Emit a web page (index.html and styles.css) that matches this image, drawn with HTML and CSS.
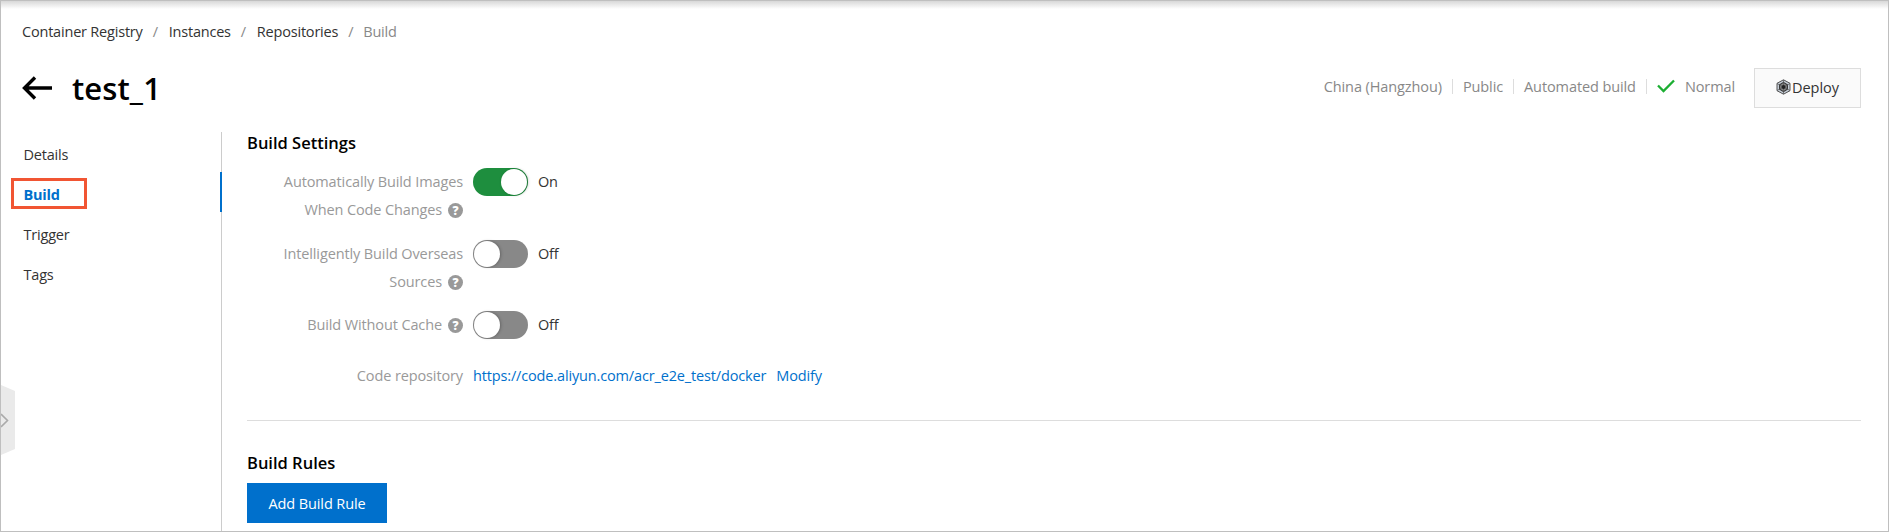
FILE: index.html
```
<!DOCTYPE html>
<html lang="en">
<head>
    <meta charset="UTF-8">
    <meta name="viewport" content="width=device-width, initial-scale=1.0">
    <title>test_1 - Container Registry</title>
    <link rel="stylesheet" href="styles.css">
</head>
<body>

<div class="page">
    <!-- Breadcrumb -->
    <nav class="breadcrumb">
        <a>Container Registry</a>
        <span class="slash">/</span>
        <a>Instances</a>
        <span class="slash">/</span>
        <a>Repositories</a>
        <span class="slash">/</span>
        <span class="current">Build</span>
    </nav>

    <!-- Title and status -->
    <header class="page-header">
        <svg class="back" width="31" height="24" viewBox="0 0 31 24">
            <path d="M13 1.5L2.5 12L13 22.5M2.5 12H30" fill="none" stroke="#000" stroke-width="3.4"/>
        </svg>
        <h1>test_1</h1>
        <div class="meta">
            <span>China (Hangzhou)</span>
            <span>Public</span>
            <span>Automated build</span>
            <span class="status">
                <svg width="18" height="14" viewBox="0 0 18 14">
                    <path d="M1 6.5L6.5 12L17 1.5" fill="none" stroke="#1cae32" stroke-width="2.3"/>
                </svg>
                Normal
            </span>
        </div>
        <button class="deploy">
            <svg width="15" height="16" viewBox="0 0 15 16">
                <path d="M7.5 .8L14 4.3V11.7L7.5 15.2L1 11.7V4.3Z" fill="#c5cdd6" stroke="#555" stroke-width="1"/>
                <path d="M7.5 3.4L11.4 5.7V10.3L7.5 12.6L3.6 10.3V5.7Z" fill="#888" stroke="#333" stroke-width="1.1"/>
                <path d="M7.5 1V15M1 4.5L14 11.5M14 4.5L1 11.5" stroke="#555" stroke-width=".7"/>
                <circle cx="7.5" cy="8" r="2" fill="#222"/>
            </svg>
            <span>Deploy</span>
        </button>
    </header>

    <div class="content">
        <!-- Side menu -->
        <ul class="side-menu">
            <li>Details</li>
            <li class="active">Build</li>
            <li>Trigger</li>
            <li>Tags</li>
        </ul>

        <main>
            <h2>Build Settings</h2>
            <div class="settings">
                <div class="row">
                    <div class="label">
                        <div>Automatically Build Images</div>
                        <div>When Code Changes<i class="help">?</i></div>
                    </div>
                    <div class="value"><span class="switch on"></span>On</div>
                </div>
                <div class="row">
                    <div class="label">
                        <div>Intelligently Build Overseas</div>
                        <div>Sources<i class="help">?</i></div>
                    </div>
                    <div class="value"><span class="switch"></span>Off</div>
                </div>
                <div class="row cache">
                    <div class="label">
                        <div>Build Without Cache<i class="help">?</i></div>
                    </div>
                    <div class="value"><span class="switch"></span>Off</div>
                </div>
                <div class="row repo">
                    <div class="label">Code repository</div>
                    <div class="value"><a>https://code.aliyun.com/acr_e2e_test/docker</a><a>Modify</a></div>
                </div>
            </div>

            <h2 class="rules">Build Rules</h2>
            <button class="primary">Add Build Rule</button>
        </main>
    </div>

    <!-- Collapsed drawer handle -->
    <svg class="drawer" width="14" height="70" viewBox="0 0 14 70">
        <path d="M0 0L14 6V64L0 70Z" fill="#eaeaea"/>
        <path d="M0 29L6.5 35.5L0 42" fill="none" stroke="#aaa" stroke-width="1.6"/>
    </svg>
</div>

</body>
</html>
```

FILE: styles.css
```
* {
    box-sizing: border-box;
}

body {
    margin: 0;
    font-family: "Open Sans", "Noto Sans", sans-serif;
    font-size: 14.5px;
    letter-spacing: -0.2px;
    color: #333;
    background: #fff;
}

h1, h2, ul {
    margin: 0;
    padding: 0;
}

.page {
    position: relative;
    display: flex;
    flex-direction: column;
    height: 532px;
    border: 1px solid #bfbfbf;
    background: linear-gradient(#d8d8d8, #fff 8px);
    overflow: hidden;
}

/* Breadcrumb */
.breadcrumb {
    display: flex;
    gap: 10px;
    padding: 20px 0 0 21px;
    line-height: 22px;
}

.slash,
.current {
    color: #888;
}

.slash {
    width: 6px;
}

.current {
    margin-left: -1px;
}

/* Header */
.page-header {
    display: flex;
    align-items: center;
    height: 40px;
    margin: 25px 27px 0 21px;
}

h1 {
    margin-left: 19px;
    font-size: 31px;
    font-weight: 600;
    letter-spacing: 0.1px;
    line-height: 40px;
    color: #000;
}

.meta {
    display: flex;
    align-items: center;
    margin-left: auto;
    margin-top: -3px;
    letter-spacing: -0.1px;
    color: #888;
}

.meta > span {
    line-height: 15px;
    margin-right: 10px;
    padding-right: 10px;
    border-right: 1px solid #ddd;
}

.meta > .status {
    display: flex;
    gap: 10px;
    margin-right: 19px;
    padding-right: 0;
    border: 0;
}

button {
    display: flex;
    align-items: center;
    justify-content: center;
    height: 40px;
    padding: 0;
    font: inherit;
    letter-spacing: inherit;
}

.deploy {
    width: 107px;
    gap: 1px;
    padding-bottom: 2px;
    border: 1px solid #ddd;
    background: #fafafa;
    color: #333;
    letter-spacing: 0;
}

/* Body */
.content {
    display: flex;
    flex: 1;
    margin-top: 24px;
}

.side-menu {
    width: 221px;
    padding-top: 3px;
    border-right: 1px solid #ccc;
    list-style: none;
}

.side-menu li {
    position: relative;
    height: 40px;
    padding-left: 22.5px;
    line-height: 40px;
}

.side-menu .active {
    font-weight: 700;
    color: #0070cc;
}

.side-menu .active::before {
    content: "";
    position: absolute;
    left: 10px;
    top: 3px;
    width: 70px;
    height: 25px;
    border: 3px solid #f15533;
}

.side-menu .active::after {
    content: "";
    position: absolute;
    right: -1px;
    top: -3px;
    width: 2px;
    height: 40px;
    background: #0070cc;
}

main {
    flex: 1;
    margin: 0 27px 0 25px;
}

h2 {
    font-size: 16.5px;
    font-weight: 600;
    letter-spacing: 0;
    line-height: 22px;
    color: #000;
}

.settings {
    display: flex;
    flex-direction: column;
    gap: 16px;
    margin-top: 14px;
    padding-bottom: 30px;
    border-bottom: 1px solid #ddd;
}

.row {
    display: grid;
    grid-template-columns: 216px 1fr;
    gap: 10px;
    line-height: 28px;
}

.cache {
    margin-top: -1px;
}

.repo {
    margin-top: 7px;
}

.label {
    text-align: right;
    letter-spacing: -0.12px;
    color: #999;
}

.value {
    display: flex;
    height: 28px;
}

.value a {
    color: #0070cc;
    margin-right: 10px;
    letter-spacing: -0.15px;
}

.help {
    display: inline-block;
    width: 15px;
    height: 15px;
    margin-left: 6px;
    border-radius: 50%;
    background: #999;
    color: #fff;
    font-size: 12px;
    font-style: normal;
    font-weight: 800;
    letter-spacing: 0;
    line-height: 15px;
    text-align: center;
}

.switch {
    width: 55px;
    height: 28px;
    margin-right: 10px;
    padding: 1px;
    border-radius: 14px;
    background: #888;
}

.switch::before {
    content: "";
    display: block;
    width: 26px;
    height: 26px;
    border-radius: 50%;
    background: #fff;
    box-shadow: 1px 0 3px rgba(0, 0, 0, 0.25);
}

.switch.on {
    background: #1e8e3e;
}

.switch.on::before {
    margin-left: auto;
}

.rules {
    margin-top: 31px;
}

.primary {
    width: 140px;
    margin-top: 9px;
    border: 0;
    background: #0070cc;
    color: #fff;
    letter-spacing: -0.1px;
}

.drawer {
    position: absolute;
    left: 0;
    top: 384px;
}
```
